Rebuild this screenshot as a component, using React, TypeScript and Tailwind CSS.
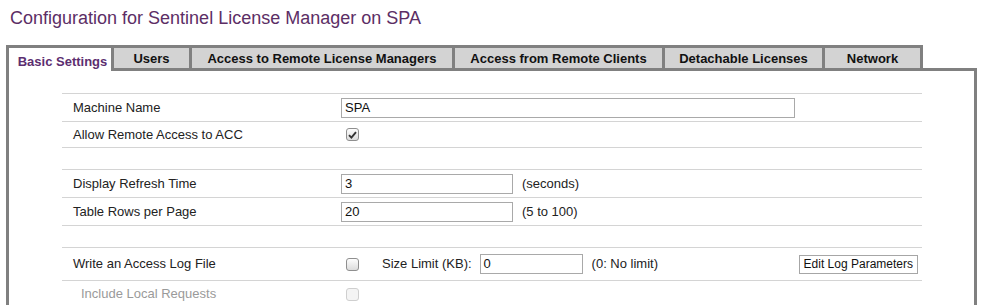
import type { ReactNode } from "react";

const TABS = [
  { label: "Basic Settings", w: "w-[108px]", active: true },
  { label: "Users", w: "w-[78px]" },
  { label: "Access to Remote License Managers", w: "w-[263px]" },
  { label: "Access from Remote Clients", w: "w-[210px]" },
  { label: "Detachable Licenses", w: "w-[160px]" },
  { label: "Network", w: "w-[98px]" },
];

function Checkbox({ checked, disabled }: { checked?: boolean; disabled?: boolean }) {
  return (
    <span
      className={`ml-[5px] flex h-[13px] w-[13px] items-center justify-center rounded-[3px] border ${
        disabled
          ? "border-[#cfcfcf] bg-[#f4f4f4]"
          : "border-[#8f8f8f] bg-gradient-to-b from-[#fdfdfd] to-[#dcdcdc]"
      }`}
    >
      {checked && (
        <svg width="9" height="8" viewBox="0 0 9 8">
          <path d="M1 4.2 L3.4 6.6 L8 1.2" fill="none" stroke="#333" strokeWidth="1.9" />
        </svg>
      )}
    </span>
  );
}

function TextInput({ value, w }: { value: string; w: string }) {
  return (
    <div className={`${w} flex h-[20px] items-center border border-[#a9a9a9] bg-white pl-[3px] text-[13px] text-[#111]`}>
      {value}
    </div>
  );
}

function Row({ label, h, muted, children }: { label?: string; h: string; muted?: boolean; children?: ReactNode }) {
  return (
    <div className={`flex ${h} items-center border-b border-[#d4d4d4]`}>
      <div className={`w-[279px] ${muted ? "pl-[19px] text-[#9a9a9a]" : "pl-[11px] text-[#222]"}`}>{label}</div>
      <div className="flex flex-1 items-center">{children}</div>
    </div>
  );
}

export default function App() {
  return (
    <div className="h-[305px] w-[985px] overflow-hidden bg-white font-['Liberation_Sans',Arial,sans-serif] text-[13px]">
      <h1 className="pl-[10px] pt-[7px] text-[18px] leading-[22px] text-[#5c2e65]">
        Configuration for Sentinel License Manager on SPA
      </h1>

      <div className="ml-[6px] mt-[16px] w-[971px]">
        {/* tabs */}
        <div className="relative z-10 flex h-[26px]">
          {TABS.map((t, i) => (
            <div
              key={t.label}
              className={`${t.w} flex h-[26px] justify-center border-t-[3px] border-r-[3px] border-[#808080] font-bold ${
                i === 0 ? "border-l-[3px]" : ""
              } ${
                t.active
                  ? "bg-white pl-[5px] pt-[4px] text-[#5c2e70]"
                  : "border-b-[3px] bg-[#d3d3d3] pt-[1px] text-[#111]"
              }`}
            >
              {t.label}
            </div>
          ))}
        </div>

        {/* panel */}
        <div className="-mt-[3px] h-[240px] border-x-[3px] border-t-[3px] border-[#808080] pl-[53px] pt-[22px]">
          <div className="w-[860px] border-t border-[#d4d4d4]">
            <Row label="Machine Name" h="h-[28px]">
              <TextInput value="SPA" w="w-[454px]" />
            </Row>
            <Row label="Allow Remote Access to ACC" h="h-[26px]">
              <Checkbox checked />
            </Row>
            <Row h="h-[22px]" />
            <Row label="Display Refresh Time" h="h-[28px]">
              <TextInput value="3" w="w-[172px]" />
              <span className="ml-[9px] text-[#222]">(seconds)</span>
            </Row>
            <Row label="Table Rows per Page" h="h-[28px]">
              <TextInput value="20" w="w-[172px]" />
              <span className="ml-[9px] text-[#222]">(5 to 100)</span>
            </Row>
            <Row h="h-[22px]" />
            <Row label="Write an Access Log File" h="h-[33px]">
              <Checkbox />
              <span className="ml-[23px] mr-[8px] text-[#222]">Size Limit (KB):</span>
              <TextInput value="0" w="w-[103px]" />
              <span className="ml-[9px] text-[#222]">(0: No limit)</span>
              <button className="ml-auto mr-[4px] h-[19px] border border-[#a6a6a6] bg-white px-[4px] text-[12px] leading-[16px] text-[#111]">
                Edit Log Parameters
              </button>
            </Row>
            <div className="flex h-[26px] items-center">
              <div className="w-[279px] pl-[19px] text-[#9a9a9a]">Include Local Requests</div>
              <Checkbox disabled />
            </div>
          </div>
        </div>
      </div>
    </div>
  );
}
